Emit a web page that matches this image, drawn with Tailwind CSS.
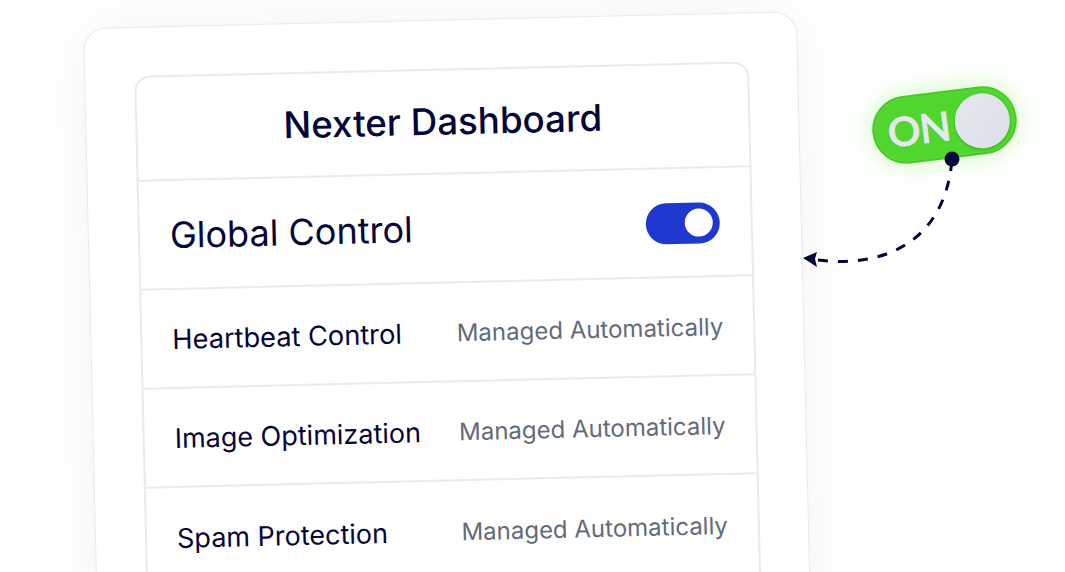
<!DOCTYPE html>
<html lang="en">
<head>
    <meta charset="UTF-8">
    <title>Nexter Dashboard</title>
    <script src="https://cdn.jsdelivr.net/npm/@tailwindcss/browser@4"></script>
</head>
<body class="bg-white font-['Inter',sans-serif] text-[#04053a] w-[1065px] h-[572px] overflow-hidden relative">

    <!-- Card -->
    <div class="ml-[83px] mt-[28px] w-[714px] h-[640px] origin-top-left rotate-[-1.35deg] bg-white rounded-[24px] border border-[#e8eaf1] shadow-[0_0_60px_rgba(10,10,60,0.05)] pl-[49px] pr-[48px] pt-[48px]">
        <div class="h-[620px] rounded-[16px] border-2 border-[#e7eaf5]">
            <div class="h-[104px] flex items-center justify-center border-b-2 border-[#e7eaf5] text-[36.7px] font-medium leading-none">Nexter Dashboard</div>
            <div class="h-[109px] pt-[1px] flex items-center justify-between border-b-2 border-[#e7eaf5] pl-[30px] pr-[31px]">
                <span class="text-[36px] leading-none">Global Control</span>
                <div class="w-[74px] h-[41px] rounded-full bg-[#1f38d0] flex items-center justify-end pr-[7px]">
                    <div class="w-[28px] h-[28px] rounded-full bg-white"></div>
                </div>
            </div>
            <div class="h-[99px] pt-[2px] flex items-center justify-between border-b-2 border-[#e7eaf5] pl-[30px] pr-[30px]">
                <span class="text-[27.2px] leading-none">Heartbeat Control</span>
                <span class="text-[24px] leading-none text-[#636b78]">Managed Automatically</span>
            </div>
            <div class="h-[99px] pt-[2px] flex items-center justify-between border-b-2 border-[#e7eaf5] pl-[30px] pr-[30px]">
                <span class="text-[27px] leading-none">Image Optimization</span>
                <span class="text-[24px] leading-none text-[#636b78]">Managed Automatically</span>
            </div>
            <div class="h-[99px] pt-[2px] flex items-center justify-between pl-[30px] pr-[30px]">
                <span class="text-[27px] leading-none">Spam Protection</span>
                <span class="text-[24px] leading-none text-[#636b78]">Managed Automatically</span>
            </div>
        </div>
    </div>

    <!-- ON switch -->
    <div class="absolute left-[872px] top-[91px] w-[145px] h-[68px] rotate-[-7deg] rounded-full bg-[#50d62e] border-2 border-[#48c925] shadow-[0_0_26px_rgba(110,230,70,0.35),inset_0_0_0_1px_#58dc38] flex items-center justify-between pl-[13px] pr-[5px]">
        <span class="font-['Lato',sans-serif] text-[41px] font-bold leading-none tracking-[-1px] text-[#e6e8f0]">ON</span>
        <div class="w-[55px] h-[55px] rounded-full bg-gradient-to-br from-[#e6e8f0] to-[#dcdfe9] shadow-[0_1px_3px_rgba(30,90,20,0.35)]"></div>
    </div>

    <!-- Connector -->
    <svg class="absolute left-0 top-0 pointer-events-none" width="1065" height="572" viewBox="0 0 1065 572" fill="none">
        <path d="M818 260C880 268 945 245 952 159" stroke="#04053a" stroke-width="3" stroke-dasharray="10 10"/>
        <circle cx="952" cy="159" r="7.5" fill="#04053a"/>
        <path d="M803 258L817 252L815 259L817 267Z" fill="#04053a"/>
    </svg>
</body>
</html>
